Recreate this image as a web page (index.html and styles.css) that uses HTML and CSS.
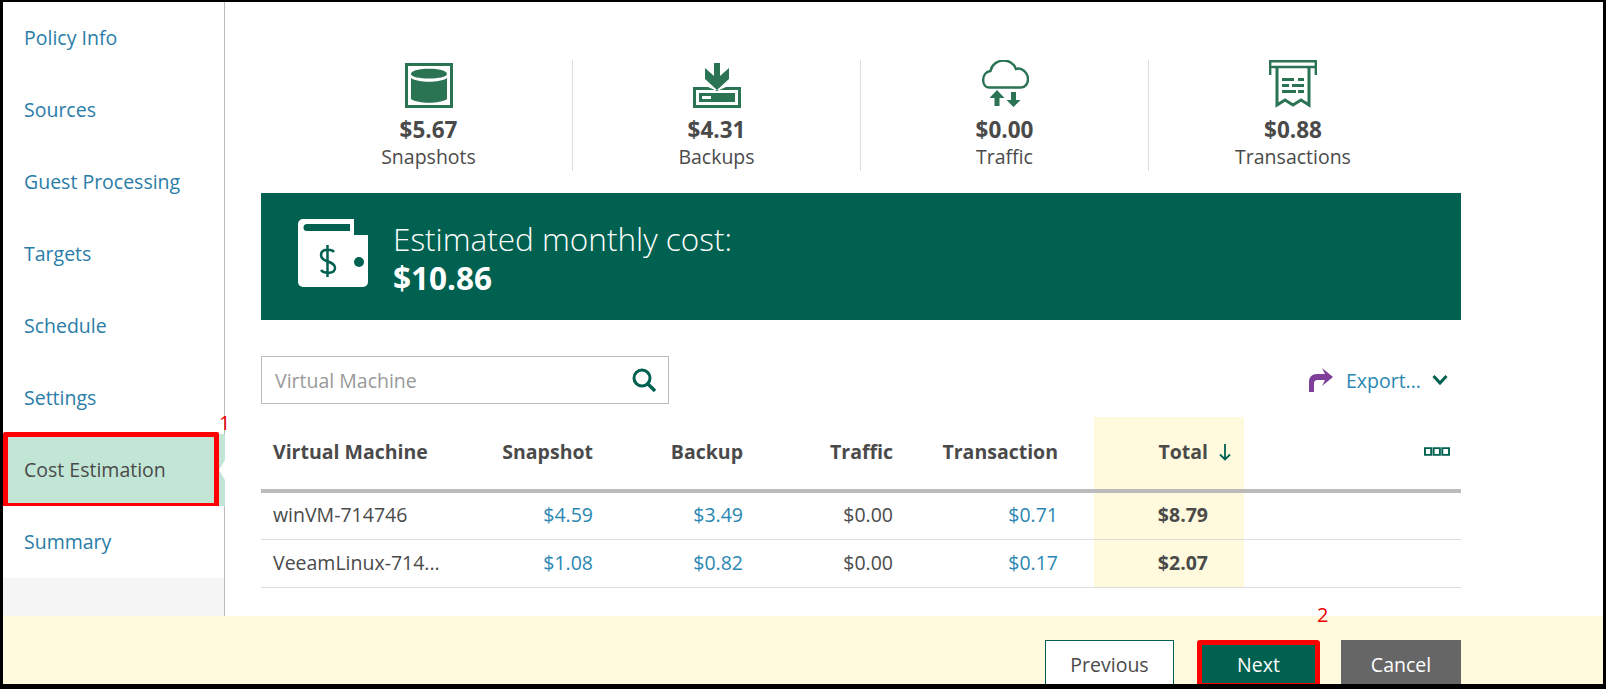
FILE: index.html

```html
<!DOCTYPE html>
<html lang="en">
<head>
    <meta charset="UTF-8">
    <title>Cost Estimation</title>
    <link rel="stylesheet" href="styles.css">
</head>
<body>
<div class="window">
    <div class="main">
        <ul class="nav">
            <li class="nav-item">Policy Info</li>
            <li class="nav-item">Sources</li>
            <li class="nav-item">Guest Processing</li>
            <li class="nav-item">Targets</li>
            <li class="nav-item">Schedule</li>
            <li class="nav-item">Settings</li>
            <li class="nav-item active">Cost Estimation
                <span class="mark-box"></span>
                <span class="mark-num">1</span>
            </li>
            <li class="nav-item">Summary</li>
        </ul>

        <div class="content">
            <div class="stats">
                <div class="stat">
                    <svg class="stat-icon" viewBox="0 0 48 48">
                        <path fill="#2a7353" fill-rule="evenodd" d="M0 3h48v45H0zM3 6v39h42V6z"/>
                        <path fill="#2a7353" d="M6 14c0-7 36-7 36 0 0 6-36 6-36 0zM6 18c7 5 29 5 36 0v21c-7 5-29 5-36 0z"/>
                    </svg>
                    <b class="stat-value">$5.67</b>
                    <span class="stat-label">Snapshots</span>
                </div>
                <div class="stat">
                    <svg class="stat-icon" viewBox="0 0 48 48">
                        <path fill="#2a7353" d="M21 3h6v13l9-8v11L24 30 12 19V8l9 8z"/>
                        <path fill="#2a7353" fill-rule="evenodd" d="M0 27h15l9 4 9-4h15v21H0zM3 30v15h42V30zM6 33h36v9H6zM9 36v3h9v-3z"/>
                    </svg>
                    <b class="stat-value">$4.31</b>
                    <span class="stat-label">Backups</span>
                </div>
                <div class="stat">
                    <svg class="stat-icon" viewBox="0 0 48 48">
                        <path fill="none" stroke="#2a7353" stroke-width="2.400" d="M8 27.500C0 27.500 0 12 9.500 11 12-2 31-3 35 9c6-2 12 4 12 10 0 5-3 8.500-7 8.500z"/>
                        <path fill="#2a7353" d="M16 30l7.500 8h-5v8h-5v-8h-5zM30 32h5v8h4.500l-7 7-7-7H30z"/>
                    </svg>
                    <b class="stat-value">$0.00</b>
                    <span class="stat-label">Traffic</span>
                </div>
                <div class="stat">
                    <svg class="stat-icon" viewBox="0 0 48 48">
                        <path fill="none" stroke="#2a7353" stroke-width="2.400" d="M1.200 15V1.200h45.600V15M2 7h44"/>
                        <path fill="none" stroke="#2a7353" stroke-width="3" d="M8 6v39l8-5 8 5 8-5 8 5V6"/>
                        <path fill="#2a7353" d="M13 18h12v3H13zM29 18h6v3h-6zM13 24h7v3h-7zM23 24h12v3H23zM13 30h14v3H13zM29 30h6v3h-6z"/>
                    </svg>
                    <b class="stat-value">$0.88</b>
                    <span class="stat-label">Transactions</span>
                </div>
            </div>

            <div class="banner">
                <svg class="wallet" viewBox="0 0 70 68">
                    <path fill="#fff" fill-rule="evenodd" d="M5 0h51v16h14v47a5 5 0 0 1-5 5H5a5 5 0 0 1-5-5V5a5 5 0 0 1 5-5zM9 5a3.500 3.500 0 0 0 0 7h43V5z"/>
                    <circle cx="61" cy="43" r="5" fill="#006150"/>
                    <path fill="none" stroke="#006150" stroke-width="2.500" d="M36 33c-2-3-13-4-13 3 0 8 14 5 14 13 0 6-11 6-14 2M29.500 26v32"/>
                </svg>
                <div class="banner-text">
                    <span class="banner-title">Estimated monthly cost:</span>
                    <b class="banner-value">$10.86</b>
                </div>
            </div>

            <div class="toolbar">
                <div class="search">
                    <span class="search-text">Virtual Machine</span>
                    <svg class="search-icon" viewBox="0 0 24 24">
                        <circle cx="10" cy="10" r="8" fill="none" stroke="#006150" stroke-width="3"/>
                        <path d="M15.500 15.500l7.500 7.500" stroke="#006150" stroke-width="3.400"/>
                    </svg>
                </div>
                <div class="export">
                    <svg class="export-icon" viewBox="0 0 24 24">
                        <path fill="#7d3f98" d="M0 24V14C0 9 3 6 8 6h8L13 0l11 9-11 9 3-6H9c-3 0-4 1-4 4v8z"/>
                    </svg>
                    <span class="export-text">Export...</span>
                    <svg class="chevron" viewBox="0 0 16 12">
                        <path fill="none" stroke="#006150" stroke-width="3" d="M1.500 2l6.500 7 6.500-7"/>
                    </svg>
                </div>
            </div>

            <table class="grid">
                <colgroup>
                    <col class="col-name">
                    <col class="col-num">
                    <col class="col-num">
                    <col class="col-num">
                    <col class="col-trans">
                    <col class="col-num">
                    <col>
                </colgroup>
                <thead>
                    <tr>
                        <th class="name">Virtual Machine</th>
                        <th>Snapshot</th>
                        <th>Backup</th>
                        <th>Traffic</th>
                        <th class="wide">Transaction</th>
                        <th class="wide total sort">Total
                            <svg class="sort-icon" viewBox="0 0 12 18">
                                <path fill="none" stroke="#006150" stroke-width="1.800" d="M6 1v15M1 11.500l5 5 5-5"/>
                            </svg>
                        </th>
                        <th class="more">
                            <svg class="more-icon" viewBox="0 0 27 9">
                                <path fill="none" stroke="#006150" stroke-width="2" d="M1 1h6.500v7H1zM10 1h6.500v7H10zM19 1h7v7h-7z"/>
                            </svg>
                        </th>
                    </tr>
                </thead>
                <tbody>
                    <tr>
                        <td class="name">winVM-714746</td>
                        <td class="link">$4.59</td>
                        <td class="link">$3.49</td>
                        <td>$0.00</td>
                        <td class="link wide">$0.71</td>
                        <td class="wide total">$8.79</td>
                        <td></td>
                    </tr>
                    <tr>
                        <td class="name">VeeamLinux-714...</td>
                        <td class="link">$1.08</td>
                        <td class="link">$0.82</td>
                        <td>$0.00</td>
                        <td class="link wide">$0.17</td>
                        <td class="wide total">$2.07</td>
                        <td></td>
                    </tr>
                </tbody>
            </table>
        </div>
    </div>

    <div class="footer">
        <button class="btn btn-prev">Previous</button>
        <button class="btn btn-next">Next</button>
        <button class="btn btn-cancel">Cancel</button>
    </div>
    <span class="mark-num mark-num-next">2</span>
</div>
</body>
</html>
```

FILE: styles.css

```css
* {
    box-sizing: border-box;
}

html, body {
    margin: 0;
    height: 689px;
    overflow: hidden;
}

body {
    background: #000;
    padding: 2px 3px 5px 3px;
    font-family: 'Open Sans', 'Liberation Sans', sans-serif;
    color: #4a4a4a;
}

.window {
    position: relative;
    height: 682px;
    background: #fff;
    display: flex;
    flex-direction: column;
}

.main {
    flex: 1;
    display: flex;
    min-height: 0;
}

/* left menu */
.nav {
    list-style: none;
    margin: 0;
    padding: 0;
    width: 222px;
    flex: none;
    background: #f5f5f5;
    border-right: 1px solid #bbb;
}

.nav-item {
    position: relative;
    height: 72px;
    padding-left: 21px;
    background: #fff;
    color: #2a7da8;
    font-size: 19.5px;
    line-height: 72px;
}

.nav-item.active {
    background: #c2e6d6;
    color: #4a4a4a;
    margin-right: -1px;
}

/* small notch pointing at the page */
.nav-item.active::after {
    content: "";
    position: absolute;
    right: 0;
    top: 26px;
    border: 10px solid transparent;
    border-right: 6px solid #fff;
    border-left: 0;
}

.mark-box {
    position: absolute;
    left: 0;
    top: -2px;
    width: 216px;
    height: 76px;
    border: 5px solid #f00;
    border-radius: 2px;
}

.mark-num {
    position: absolute;
    left: 216px;
    top: -23px;
    color: #e00;
    font-size: 20px;
    line-height: 24px;
}

.content {
    flex: 1;
    padding: 58px 0 0 36px;
    min-width: 0;
}

/* cost tiles */
.stats {
    display: flex;
    width: 1200px;
    padding: 0 24px;
}

.stat {
    width: 288px;
    height: 111px;
    display: flex;
    flex-direction: column;
    align-items: center;
    border-right: 1px solid #ddd;
}

.stat:last-child {
    border-right: none;
}

.stat-icon {
    width: 48px;
    height: 48px;
    margin-bottom: 7px;
    flex: none;
}

.stat-value {
    font-size: 22.500px;
    line-height: 30px;
}

.stat-label {
    font-size: 19.5px;
    line-height: 24px;
}

.banner {
    width: 1200px;
    height: 127px;
    margin-top: 22px;
    padding-left: 37px;
    background: #006150;
    color: #fff;
    display: flex;
    align-items: center;
}

.wallet {
    width: 70px;
    height: 68px;
    margin: 0 25px 7px 0;
}

.banner-text {
    display: flex;
    flex-direction: column;
}

.banner-title {
    font-size: 31.5px;
    font-weight: 300;
    line-height: 42px;
}

.banner-value {
    font-size: 31.5px;
    line-height: 36px;
}

.toolbar {
    width: 1200px;
    margin-top: 36px;
    display: flex;
    justify-content: space-between;
    align-items: center;
}

.search {
    width: 408px;
    height: 48px;
    border: 1px solid #bbb;
    padding: 0 12px 0 13px;
    display: flex;
    justify-content: space-between;
    align-items: center;
}

.search-text {
    color: #999;
    font-size: 19.5px;
}

.search-icon {
    width: 24px;
    height: 24px;
}

.export {
    display: flex;
    align-items: center;
    padding-right: 13px;
}

.export-icon {
    width: 24px;
    height: 24px;
    margin-right: 13px;
}

.export-text {
    color: #2a87b3;
    font-size: 19.5px;
    margin-right: 11px;
}

.chevron {
    width: 16px;
    height: 12px;
}

/* results table */
.grid {
    width: 1200px;
    margin-top: 13px;
    border-collapse: collapse;
    table-layout: fixed;
    font-size: 19.5px;
}

.col-name { width: 194px; }
.col-num { width: 150px; }
.col-trans { width: 189px; }

.grid th {
    height: 74px;
    padding: 0 12px 4px;
    text-align: right;
    font-weight: 700;
    border-bottom: 4px solid #bbb;
}

.grid td {
    height: 48px;
    padding: 0 12px 2px;
    text-align: right;
    border-bottom: 1px solid #ddd;
    white-space: nowrap;
}

.grid .name {
    text-align: left;
}

.grid .wide {
    padding-right: 36px;
}

.grid .total {
    background: #fffadd;
}

.grid td.total {
    font-weight: 700;
}

.grid .link {
    color: #2a87b3;
}

.sort {
    position: relative;
}

.sort-icon {
    position: absolute;
    right: 13px;
    top: 26px;
    width: 12px;
    height: 18px;
}

.more-icon {
    width: 26px;
    height: 9px;
    display: block;
    margin-left: auto;
}

.grid .more {
    padding-right: 11px;
}

.footer {
    height: 68px;
    flex: none;
    padding: 24px 142px 0 0;
    background: #fffadd;
    display: flex;
    justify-content: flex-end;
    gap: 23px;
    overflow: hidden;
}

.btn {
    height: 48px;
    padding: 0;
    font-family: inherit;
    font-size: 19.5px;
    border: 1px solid transparent;
}

.btn-prev {
    width: 129px;
    background: #fff;
    border-color: #006150;
    color: #4a4a4a;
}

.btn-next {
    width: 123px;
    margin-right: -2px;
    background: #006150;
    border: 5px solid #f00;
    border-radius: 3px;
    color: #fff;
}

.btn-cancel {
    width: 120px;
    background: #666;
    color: #fff;
}

.mark-num-next {
    left: 1314px;
    top: 601px;
}
```
